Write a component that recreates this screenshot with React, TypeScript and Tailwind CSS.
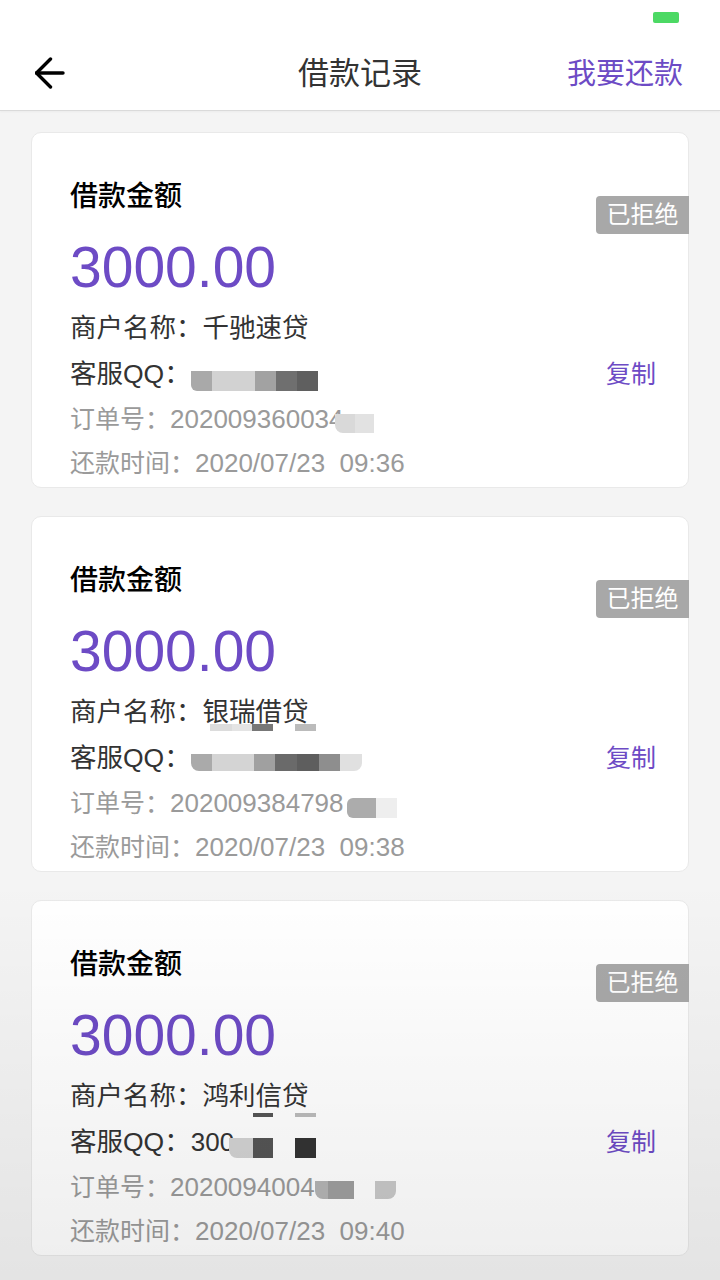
import React from 'react';

const font = { fontFamily: '"Liberation Sans", "Noto Sans CJK SC", sans-serif' };

type Blk = { w: number; c: string; r?: string };

function Blur({ blocks, h, mt = 0, ml = 0 }: { blocks: Blk[]; h: number; mt?: number; ml?: number }) {
  return (
    <span className="inline-flex" style={{ marginTop: mt, marginLeft: ml }}>
      {blocks.map((b, i) => (
        <span
          key={i}
          className={b.r}
          style={{ width: b.w, height: h, background: b.c, display: 'inline-block' }}
        />
      ))}
    </span>
  );
}

type Record = {
  merchant: string;
  marks?: { left: number; w: number; c: string }[];
  markTop?: number;
  markH?: number;
  qqPrefix?: string;
  qq: Blk[];
  qqH: number;
  qqMt: number;
  qqMl: number;
  order: string;
  orderBlur: Blk[];
  orderH: number;
  orderMt: number;
  orderMl: number;
  time: string;
};

const records: Record[] = [
  {
    merchant: '千驰速贷',
    qq: [
      { w: 21, c: '#a9a9a9', r: 'rounded-bl-[6px]' },
      { w: 43, c: '#d2d2d2' },
      { w: 21, c: '#a2a2a2' },
      { w: 21, c: '#6f6f6f' },
      { w: 21, c: '#5f5f5f' },
    ],
    qqH: 20,
    qqMt: 14,
    qqMl: 0,
    order: '202009360034',
    orderBlur: [
      { w: 20, c: '#d9d9d9', r: 'rounded-bl-[8px]' },
      { w: 19, c: '#e2e2e2' },
    ],
    orderH: 19,
    orderMt: 9,
    orderMl: -9,
    time: '2020/07/23  09:36',
  },
  {
    merchant: '银瑞借贷',
    marks: [
      { left: 0, w: 22, c: '#dcdcdc' },
      { left: 22, w: 20, c: '#e4e4e4' },
      { left: 42, w: 21, c: '#777777' },
      { left: 85, w: 21, c: '#bbbbbb' },
    ],
    markTop: 27,
    markH: 7,
    qq: [
      { w: 21, c: '#aaaaaa', r: 'rounded-bl-[8px]' },
      { w: 42, c: '#d4d4d4' },
      { w: 21, c: '#a0a0a0' },
      { w: 22, c: '#6a6a6a' },
      { w: 22, c: '#5e5e5e' },
      { w: 21, c: '#8e8e8e' },
      { w: 22, c: '#e0e0e0', r: 'rounded-br-[8px]' },
    ],
    qqH: 17,
    qqMt: 9,
    qqMl: 0,
    order: '202009384798',
    orderBlur: [
      { w: 29, c: '#acacac', r: 'rounded-l-[6px]' },
      { w: 21, c: '#eeeeee' },
    ],
    orderH: 20,
    orderMt: 10,
    orderMl: 3,
    time: '2020/07/23  09:38',
  },
  {
    merchant: '鸿利信贷',
    marks: [
      { left: 43, w: 20, c: '#555555' },
      { left: 85, w: 21, c: '#bbbbbb' },
    ],
    markTop: 32,
    markH: 4,
    qqPrefix: '300',
    qq: [
      { w: 24, c: '#d2d2d2', r: 'rounded-bl-[8px]' },
      { w: 20, c: '#555555' },
      { w: 22, c: 'transparent' },
      { w: 21, c: '#333333' },
    ],
    qqH: 20,
    qqMt: 12,
    qqMl: -5,
    order: '2020094004',
    orderBlur: [
      { w: 13, c: '#b4b4b4', r: 'rounded-bl-[8px]' },
      { w: 26, c: '#9e9e9e' },
      { w: 21, c: 'transparent' },
      { w: 21, c: '#c8c8c8', r: 'rounded-br-[8px]' },
    ],
    orderH: 18,
    orderMt: 6,
    orderMl: 0,
    time: '2020/07/23  09:40',
  },
];

function RecordCard({ r }: { r: Record }) {
  return (
    <div className="relative bg-white rounded-[10px] border border-[#e9e9e9] h-[356px] pl-[38px] pr-[32px] pt-[44px]">
      <div className="text-[28px] leading-[40px] font-medium text-black">借款金额</div>
      <div className="mt-[18px] text-[57px] leading-[64px] text-[#6d4bc5]">3000.00</div>
      <div className="mt-[6px] text-[26.5px] leading-[46px] text-[#333]">
        商户名称：
        <span className="relative">
          {r.merchant}
          {r.marks && (
            <span className="absolute left-[7px] w-[110px]" style={{ top: r.markTop, height: r.markH }}>
              {r.marks.map((m, i) => (
                <span
                  key={i}
                  className="absolute top-0 bottom-0"
                  style={{ left: m.left, width: m.w, background: m.c }}
                />
              ))}
            </span>
          )}
        </span>
      </div>
      <div className="flex items-center justify-between text-[26px] leading-[46px]">
        <div className="flex items-center text-[#333]">
          <span className="text-[26.5px]">客服QQ：</span>
          {r.qqPrefix && <span className="whitespace-nowrap">{r.qqPrefix}</span>}
          <Blur blocks={r.qq} h={r.qqH} mt={r.qqMt} ml={r.qqMl} />
        </div>
        <span className="text-[25px] text-[#6d4bc5]">复制</span>
      </div>
      <div className="flex items-center leading-[44px] text-[#9a9a9a]">
        <span className="text-[25px]">订单号：</span>
        <span className="text-[26px]">{r.order}</span>
        <Blur blocks={r.orderBlur} h={r.orderH} mt={r.orderMt} ml={r.orderMl} />
      </div>
      <div className="leading-[44px] text-[#9a9a9a] whitespace-pre">
        <span className="text-[25px]">还款时间：</span>
        <span className="text-[26px]">{r.time}</span>
      </div>
      <div className="absolute right-[-1px] top-[63px] h-[38px] w-[93px] rounded-l-[4px] bg-[#a8a8a8] text-white text-[24px] leading-[38px] text-center">
        已拒绝
      </div>
    </div>
  );
}

export default function App() {
  return (
    <div className="relative min-h-[1280px] bg-[#f4f4f4] overflow-hidden" style={font}>
      <header className="bg-white border-b border-[#dadada] shadow-[0_1px_2px_rgba(0,0,0,0.04)]">
        <div className="h-[38px] flex justify-end items-start pt-[12px] pr-[41px]">
          <div className="w-[26px] h-[11px] rounded-[2px] bg-[#4cd964]" />
        </div>
        <div className="h-[72px] flex items-center justify-between px-[35px] pr-[37px]">
          <svg width="30" height="32" viewBox="0 0 30 32" fill="none" className="-mt-[2px]">
            <path d="M1.5 16 H28" stroke="#000" strokeWidth="3.4" strokeLinecap="round" />
            <path d="M15.5 2 L1.5 16 L15.5 30" stroke="#000" strokeWidth="3.4" strokeLinecap="round" strokeLinejoin="round" />
          </svg>
          <div className="absolute left-0 right-0 text-center text-[31px] leading-[40px] text-[#333] pointer-events-none">
            借款记录
          </div>
          <span className="text-[29px] leading-[40px] text-[#6d4bc5]">我要还款</span>
        </div>
      </header>
      <main className="flex flex-col gap-[28px] px-[31px] pt-[21px] pb-[24px]">
        {records.map((r, i) => (
          <RecordCard key={i} r={r} />
        ))}
      </main>
      <div className="pointer-events-none absolute left-0 right-0 bottom-0 h-[400px] bg-gradient-to-b from-transparent to-[rgba(0,0,0,0.065)]" />
    </div>
  );
}
